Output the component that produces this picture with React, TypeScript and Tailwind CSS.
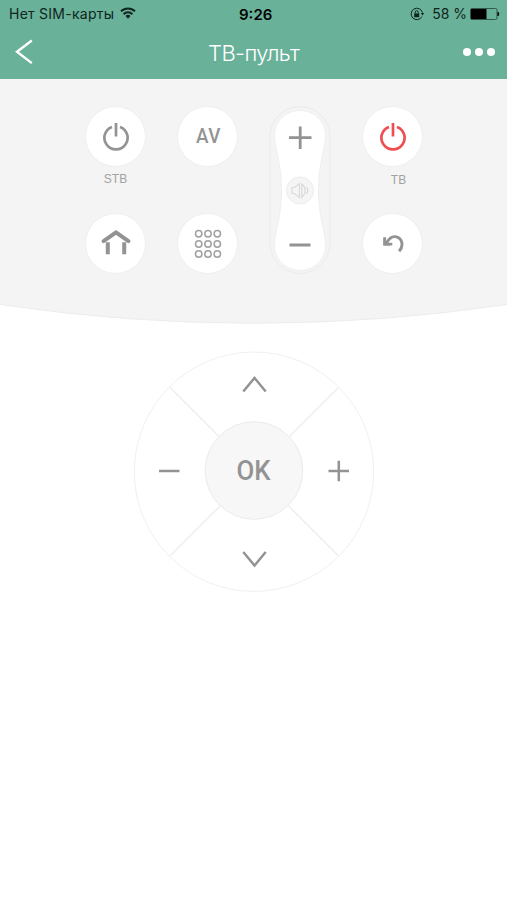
import type { ReactNode } from 'react'

function StatusBar() {
  return (
    <div className="relative flex h-7 items-center justify-between pl-[9px] pr-[6px] text-[#10251d]">
      <div className="flex items-center gap-[6px]">
        <span className="whitespace-nowrap text-[14px] leading-none tracking-[0.26px]">Нет SIM-карты</span>
        <svg className="-mt-[2px]" width="16" height="12" viewBox="0 0 16 12" fill="none" stroke="currentColor" strokeWidth="2">
          <path d="M1 4.3a10 10 0 0 1 14 0" />
          <path d="M3.6 7.2a6.2 6.2 0 0 1 8.8 0" />
          <path d="M5.5 9.1a3.5 3.5 0 0 1 5 0L8 11.8Z" fill="currentColor" stroke="none" />
        </svg>
      </div>
      <span className="absolute left-[239px] text-[15px] font-semibold leading-none text-black">9:26</span>
      <div className="flex items-center">
        <svg width="15" height="14" viewBox="0 0 15 14" fill="none" stroke="currentColor">
          <path d="M11.9 9.6A5.7 5.7 0 1 1 12.4 5.6" />
          <path d="M10.8 6h3.4l-1.7 2.6Z" fill="currentColor" stroke="none" />
          <rect x="4.2" y="6.4" width="5" height="3.8" fill="currentColor" stroke="none" />
          <path d="M5.2 6.5V5.2a1.5 1.5 0 0 1 3 0v1.3" />
        </svg>
        <span className="ml-[7px] whitespace-nowrap text-[14px] leading-none">58 %</span>
        <svg className="ml-[3px]" width="31" height="14" viewBox="0 0 31 14">
          <rect x="0.5" y="1.5" width="26.5" height="11" rx="1.5" fill="none" stroke="#31584a" />
          <rect x="1" y="2" width="15.5" height="10" fill="#000" />
          <path d="M28 5.2q1.8 1.8 0 3.6Z" fill="#000" stroke="#000" />
        </svg>
      </div>
    </div>
  )
}

function Header() {
  return (
    <header className="h-[79px] bg-[#69b199]">
      <StatusBar />
      <div className="relative flex h-[50px] items-center justify-between pl-[15px] pr-[12px] text-white">
        <button className="-mt-[3px]" aria-label="Назад">
          <svg width="20" height="26" viewBox="0 0 20 26" fill="none" stroke="currentColor" strokeWidth="2.4">
            <path d="M16.8 1.5 2 12.8l14.8 11.3" />
          </svg>
        </button>
        <h1 className="absolute left-[208px] whitespace-nowrap text-[22px] font-light leading-none tracking-[-0.6px]">ТВ-пульт</h1>
        <button className="-mt-[2px] flex gap-[4px]" aria-label="Меню">
          <span className="size-2 rounded-full bg-white" />
          <span className="size-2 rounded-full bg-white" />
          <span className="size-2 rounded-full bg-white" />
        </button>
      </div>
    </header>
  )
}

function RoundButton({ children, label }: { children: ReactNode; label: string }) {
  return (
    <button
      className="flex size-[61px] items-center justify-center rounded-full border border-[#efefef] bg-white text-[#939393]"
      aria-label={label}
    >
      {children}
    </button>
  )
}

function PowerIcon() {
  return (
    <svg width="28" height="30" viewBox="0 0 28 30" fill="none" stroke="currentColor" strokeWidth="2.7">
      <path d="M14 1v13.500" />
      <path d="M10 4.900a11.600 11.600 0 1 0 8 0" />
    </svg>
  )
}

function HomeIcon() {
  return (
    <svg className="-mt-[4px]" width="30" height="26" viewBox="0 0 30 26" fill="none" stroke="currentColor">
      <path d="M2.600 12.200 15 3.400 27.400 12.200" strokeWidth="4" strokeLinecap="round" strokeLinejoin="round" />
      <path d="M6.800 13.200v12M23.200 13.200v12" strokeWidth="4" />
    </svg>
  )
}

function KeypadIcon() {
  return (
    <svg width="28" height="30" viewBox="0 0 28 30" fill="none" stroke="#a0a0a0" strokeWidth="1.5">
      {[4.7, 15, 25].map((y) => [4.7, 14, 23.3].map((x) => <circle key={`${x}-${y}`} cx={x} cy={y} r="3.2" />))}
    </svg>
  )
}

function BackIcon() {
  return (
    <svg width="24" height="20" viewBox="0 0 24 20" fill="none" stroke="currentColor" strokeWidth="2.9">
      <path d="M5.500 9C8.500 3.500 12 2 15.500 2.900c6 1.700 7.400 9.400 2.600 14.400" />
      <path d="M3.700 3.300v6.800h7.600" />
      <path d="M2.500 4.500v7h7Z" fill="currentColor" stroke="none" />
    </svg>
  )
}

function VolumeRocker() {
  return (
    <svg width="62" height="170" viewBox="269 105 62 170" fill="none">
      <rect x="270" y="106.5" width="60" height="167" rx="30" stroke="#ebebeb" />
      <path
        d="M274.5 135C274.500 121 286 110.500 300 110.500S325.500 121 325.500 135C325.500 150 318.500 162 318.500 190S325.500 231 325.500 246C325.500 260 314 270.500 300 270.500S274.500 260 274.500 246C274.500 231 281.500 218 281.500 190S274.500 150 274.500 135Z"
        fill="#fff"
        stroke="#efefef"
      />
      <path d="M289 137.700h22.500M300.200 126.500v22.500M289.500 245h21" stroke="#939393" strokeWidth="2.800" />
      <circle cx="300" cy="190.500" r="13.500" fill="#f5f5f5" stroke="#ececec" />
      <path d="M292 187.500h2.500l5-4v14l-5-4H292ZM301.800 183.500v14q7-7 0-14M306.500 187q2.500 3.500 0 7" stroke="#dadada" strokeWidth="1.200" />
    </svg>
  )
}

function ControlPanel() {
  return (
    <section className="relative h-[245px]">
      <svg className="absolute inset-0" width="507" height="245" viewBox="0 0 507 245">
        <path d="M0 0H507V225.500Q253.500 263 0 225.500Z" fill="#f4f4f4" />
        <path d="M0 225.500Q253.500 263 507 225.500" fill="none" stroke="#ececec" />
      </svg>
      <div className="relative flex justify-between pl-[85px] pr-[84px] pt-[26px] leading-none text-[#a2a2a2]">
        <div className="flex flex-col items-center pt-[1px]">
          <RoundButton label="STB"><PowerIcon /></RoundButton>
          <span className="h-[46px] pt-[6px] font-['Liberation_Sans'] text-[12px]">STB</span>
          <RoundButton label="Домой"><HomeIcon /></RoundButton>
        </div>
        <div className="flex flex-col justify-between pb-px pt-[1px]">
          <RoundButton label="AV">
            <span className="ml-[2px] inline-block scale-x-92 font-[Roboto] text-[20.5px] font-medium tracking-[0.4px]">AV</span>
          </RoundButton>
          <RoundButton label="Цифры"><KeypadIcon /></RoundButton>
        </div>
        <VolumeRocker />
        <div className="flex flex-col items-center pt-[1px]">
          <RoundButton label="ТВ"><span className="text-[#ee4e50]"><PowerIcon /></span></RoundButton>
          <span className="h-[46px] pl-[12px] pt-[7px] font-['Liberation_Sans'] text-[12px]">ТВ</span>
          <RoundButton label="Вернуться"><BackIcon /></RoundButton>
        </div>
      </div>
    </section>
  )
}

function DirectionPad() {
  return (
    <div className="relative mx-auto mt-[27px] size-[242px]">
      <svg width="242" height="242" viewBox="133 351 242 242" fill="none">
        <circle cx="254" cy="471.700" r="119.700" stroke="#f0f0f0" />
        <path d="M170 387.500 338.500 556M338.500 387.500 170 556" stroke="#efefef" strokeWidth="1.500" />
        <circle cx="254" cy="470.500" r="48.800" fill="#f7f7f7" stroke="#ebebeb" />
        <g stroke="#939393" strokeWidth="2.500">
          <path d="M243.300 391.500 254.500 378l11.200 13.500M243.300 552l11.200 13.500L265.700 552" />
          <path d="M159 471h20.500M328.500 471h20.500M338.800 460.800v20.500" />
        </g>
      </svg>
      <button className="absolute left-[72px] top-[71px] size-[98px] rounded-full font-[Roboto] text-[28px] font-medium leading-none text-[#939393]">
        <span className="inline-block scale-x-92">OK</span>
      </button>
    </div>
  )
}

export default function App() {
  return (
    <main className="h-[900px] w-[507px] overflow-hidden bg-white font-[Inter,sans-serif]">
      <Header />
      <ControlPanel />
      <DirectionPad />
    </main>
  )
}
